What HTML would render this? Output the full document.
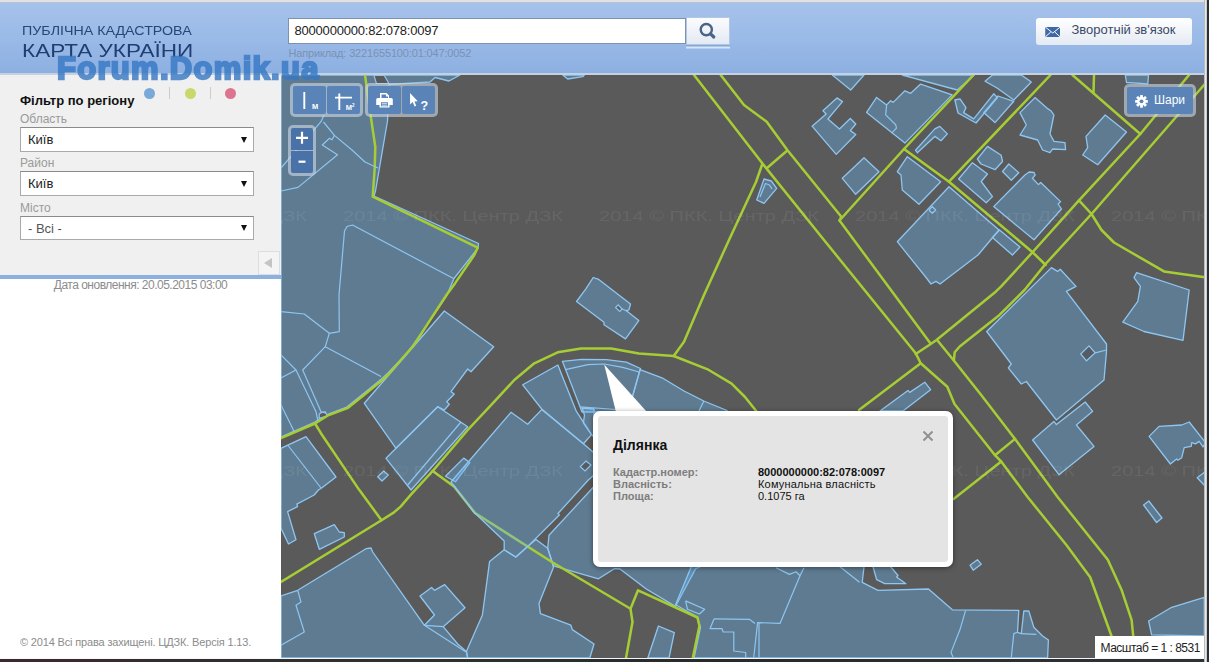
<!DOCTYPE html>
<html lang="uk"><head><meta charset="utf-8"><title>Публічна кадастрова карта України</title>
<style>
*{box-sizing:border-box;margin:0;padding:0}
html,body{width:1209px;height:662px;overflow:hidden;background:#fff;font-family:"Liberation Sans",Arial,sans-serif}
#topstrip{position:absolute;left:0;top:0;width:1209px;height:3px;background:#e2e2e2;border-bottom:1px solid #b4c3da}
#header{position:absolute;left:0;top:3px;width:1209px;height:72px;background:linear-gradient(#a5c2ea,#9abae7 50%,#8db0e2);border-bottom:2.500px solid #c5d0e0}
#logo1{position:absolute;left:22px;top:19.5px;font-size:13px;line-height:15px;color:#264777;white-space:nowrap;transform-origin:0 0;transform:scaleX(1.096)}
#logo2{position:absolute;left:21.500px;top:37.8px;font-size:18px;line-height:21px;color:#1f3f73;white-space:nowrap;transform-origin:0 0;transform:scaleX(1.252)}
#wm{position:absolute;left:57px;top:51.300px;font-size:31px;line-height:36px;font-weight:bold;color:#3678c4;opacity:.8;white-space:nowrap;letter-spacing:1.300px;-webkit-text-stroke:2.300px #3678c4;paint-order:stroke fill}
#search{position:absolute;left:288px;top:15.2px;width:398px;height:26px;background:#fff;border:1px solid #7f92ad;font-size:13px;line-height:24px;padding-left:5.500px;color:#222;letter-spacing:-.200px}
#sbtn{position:absolute;left:686px;top:14.2px;width:44px;height:28.300px;background:linear-gradient(#fbfcff,#e3e9f3);border:1px solid #b4c6e2;box-shadow:0 1.500px 0 #86a6d4,0 3.500px 0 #d3e6fb}
#hint{position:absolute;left:288.500px;top:43.7px;font-size:11px;line-height:13px;color:#7b91b3;white-space:nowrap;letter-spacing:-.150px}
#fb{position:absolute;left:1035.500px;top:14.8px;width:156px;height:27px;background:linear-gradient(#ffffff,#e4eaf3);border-radius:3px;font-size:13px;color:#3a4a66;line-height:24px;padding-left:36px;white-space:nowrap}
#side{position:absolute;left:0;top:75px;width:281px;height:587px;background:#fff}
#filter{position:absolute;left:0;top:0;width:281px;height:200px;background:#f0f0f0}
#fbar{position:absolute;left:0;top:200px;width:281px;height:4px;background:#8cb0df}
#ftitle{position:absolute;left:20px;top:18px;font-size:13px;font-weight:bold;color:#111;white-space:nowrap}
.lbl{position:absolute;left:20px;font-size:12px;color:#9a9a9a}
.sel{position:absolute;left:20px;width:234px;height:24.700px;background:#fff;border:1px solid #a9a9a9;border-top-color:#8a8a8a;font-size:13px;line-height:23px;padding-left:7px;color:#222}
.sel:after{content:"";position:absolute;right:6.500px;top:8.500px;border-left:3px solid transparent;border-right:3px solid transparent;border-top:6px solid #111}
.dot{position:absolute;top:13px;width:11px;height:11px;border-radius:50%}
.sep{position:absolute;top:12px;width:1px;height:12px;background:#ccc}
#coll{position:absolute;left:258px;top:176px;width:22px;height:24px;background:#f4f4f4;border:1px solid #ddd}
#coll:after{content:"";position:absolute;left:5px;top:6px;border-top:5px solid transparent;border-bottom:5px solid transparent;border-right:8px solid #c4c4c4}
#upd{position:absolute;left:0;top:203px;width:281px;text-align:center;font-size:12px;color:#8c8c8c;letter-spacing:-.500px}
#copy{position:absolute;left:20px;top:561px;font-size:11px;color:#8c8c8c;white-space:nowrap;letter-spacing:-.160px}
#map{position:absolute;left:281px;top:75px;width:928px;height:587px;background:#5a5a5a;overflow:hidden}
#map svg{position:absolute;left:0;top:0}
.tb{position:absolute;background:rgba(205,215,228,.62);border-radius:5px}
.tbi{position:absolute;background:#5a84b8;border-radius:2px}
.tbi svg{position:absolute;left:0;top:0}
#scale{position:absolute;left:813.500px;top:560.500px;width:112px;height:22.500px;background:#fff;font-size:12px;line-height:22px;padding-left:6px;padding-top:1.400px;color:#222;white-space:nowrap;letter-spacing:-.500px}
#pop{position:absolute;left:312px;top:335.500px;width:360px;height:156.500px;background:#fff;border-radius:7px;box-shadow:0 1px 5px rgba(0,0,0,.45)}
#popin{position:absolute;left:5px;top:5px;right:5px;bottom:5px;background:#e4e4e4;border-radius:3px}
#pop h3{position:absolute;left:20px;top:26.300px;font-size:14px;line-height:16px;color:#111}
.k{position:absolute;left:20px;font-size:11px;line-height:12px;font-weight:bold;color:#7d7d7d;white-space:nowrap}
.v{position:absolute;left:165px;font-size:11px;line-height:12px;color:#111;white-space:nowrap}
</style></head><body>
<div id="topstrip"></div>
<div id="header">
<div id="logo1">ПУБЛІЧНА КАДАСТРОВА</div>
<div id="logo2">КАРТА УКРАЇНИ</div>
<div id="search">8000000000:82:078:0097</div>
<div id="sbtn"><svg width="45" height="28" viewBox="0 0 45 28"><circle cx="19.300" cy="11.600" r="5.600" fill="none" stroke="#4a6487" stroke-width="2.400"/><path d="M23.600 15.900l3.200 3.100" stroke="#4a6487" stroke-width="3.200" stroke-linecap="round"/></svg></div>
<div id="hint">Наприклад: 3221655100:01:047:0052</div>
<div id="fb"><svg style="position:absolute;left:9px;top:9px" width="15.500" height="10" viewBox="0 0 15 10"><rect width="15" height="10" fill="#3e69a5"/><path d="M0 0l7.5 6L15 0M0 10l5.5-5M15 10l-5.5-5" stroke="#fff" stroke-width="1" fill="none"/></svg>Зворотній зв'язок</div>
</div>
<div id="side">
<div id="filter">
<div id="ftitle">Фільтр по регіону</div>
<div class="dot" style="left:144px;background:#79a9d8"></div><div class="sep" style="left:169px"></div>
<div class="dot" style="left:185px;background:#c9d86b"></div><div class="sep" style="left:210px"></div>
<div class="dot" style="left:225px;background:#dc7490"></div>
<div class="lbl" style="top:36.500px">Область</div><div class="sel" style="top:52px">Київ</div>
<div class="lbl" style="top:81px">Район</div><div class="sel" style="top:96px">Київ</div>
<div class="lbl" style="top:125.500px">Місто</div><div class="sel" style="top:140.500px;color:#555">- Всі -</div>
<div id="coll"></div>
</div>
<div id="fbar"></div>
<div id="upd">Дата оновлення: 20.05.2015 03:00</div>
<div id="copy">© 2014 Всі права захищені. ЦДЗК. Версія 1.13.</div>
</div>
<div id="map">
<svg id="mapsvg" width="928" height="587" viewBox="281 75 928 587">
<!--MAP-->
<g fill="#68b8f4" fill-opacity="0.36" stroke="#8ec6f1" stroke-width="1.3" stroke-linejoin="round">
<polygon points="281,75 460,75 449,81 435,77.5 430,82 389,84.5 387.5,121 375.5,191 374,196 478.5,243.5 478,248 454,278.5 446.5,296 424.5,329 408,352 388,373 381.5,379 363.3,393.8 346.8,407 327,414.5 314.5,422.3 281,437"/>
<polygon points="281,448.3 306,436.7 336,477 321,488.5 318.4,490 314.2,495 296.8,504.1 297.6,506.6 287.6,511.6 296,539.8 288.5,544 281,528.2"/>
<polygon points="314.3,533.7 334.3,524.7 339.3,532 344.3,532.7 344.3,537 319.3,549.3"/>
<polygon points="281,596 297.7,590.3 366,548.7 371,548 372.7,552 424.4,625.3 434.5,615 420,596 431.6,587.5 434.5,590.4 444.7,584.6 465,607.8 443.2,626.7 457.7,644 466.4,651.4 467.7,658 281,658"/>
<polygon points="364.3,403.3 444.3,311 493.7,346.7 471,371.7 467.7,369 451,391.7 454.3,394 446.7,401.7 449.3,404.3 444.3,410 437.7,406.7 396,448.3"/>
<polygon points="437.7,406.7 467.7,426.7 411,490 386,458.3 396,448.3"/>
<polygon points="377.7,476.7 383.7,471 388.3,475 382,481"/>
<polygon points="576.5,301.5 585.7,289.1 593.2,277.5 598.1,279.1 630.5,304 628.9,309.9 626.4,310.7 638.8,320.6 625.5,338.9 604,324.8 604,322.3"/>
<polygon points="562.7,75 567.7,79 582.7,76.7 584.3,75"/>
<polygon points="522.7,384.8 557.9,365 562.5,376.7 576.4,411.4 591.5,434.6 583.4,443.8 541.7,409"/>
<polygon points="562.4,361.3 581.5,359.4 606.4,359.7 626.4,362.2 640.5,368.5 633.2,394 627,412 582,412 580,406.8"/>
<polygon points="640,369.7 662,377.8 684,391 703.8,401 727,410.5 727,416 627,416 633.2,394"/>
<polygon points="582,408 594,409 594,437 591.5,434.6 583.4,423 584.5,415"/>
<polygon points="549,535.3 600,480 700,480 700,567 695.7,568.7 675.4,606.4 646.3,589 620,569 614.4,568.7 598.5,578.8 553.5,565.8 547.7,548.3"/>
<polygon points="466.4,651.4 482.4,615 489.6,561.4 504.2,549.8 515.8,557 528.8,545.4 536,539.6 547.7,548.3 553.5,567.2 539,603.5 540.4,613.6 570.9,625.2 572.3,629.6 594,644 589.8,658 467.7,658"/>
<polygon points="694,560 864.8,560 862.2,582.3 878,590.3 928.5,589 952.4,609.8 1018.8,610.3 1017.5,632.3 1021.3,633.6 1023.8,611 1028.8,611 1033.8,627.3 1042.6,636 1048.4,640 1047.6,658 694,658 700.5,627.3 696.8,616.8 675.6,604.8"/>
<polygon points="872.8,566 876.7,579.7 884.7,583.7 905.9,583.7 896.6,577 898,575.5 890,566"/>
<polygon points="658.4,626 674.3,632.6 669,658 647.8,658"/>
<polygon points="832.3,75 850.7,90 864,75"/>
<polygon points="902.3,75 957.3,90 972.3,76.7 974,75"/>
<polygon points="812.1,126.2 826.2,114 822.9,110.7 837,97.9 842.5,101.6 827.9,119 839.5,129 850.3,118.5 855.8,124 850.3,130.6 855.8,134.5 836.2,154.4"/>
<polygon points="866.6,112.4 876.6,97.4 886.6,104.9 890.7,100.7 893.2,102.4 904.9,90.8 910.7,93.3 920.6,84.1 952.2,94.9 904.9,143.1"/>
<polygon points="915.5,150.2 934.8,128.9 939.8,126.4 947.4,133.9 941,140.7 934.8,136.4 917.3,152.7"/>
<polygon points="985,81.3 992.5,75 1021.3,75 1031.3,82 1013.8,100 997,88"/>
<polygon points="983.7,112.6 998,96 1013.8,101.3 995,122.6"/>
<polygon points="954.9,100 960,98.8 966,107.6 963.6,112.6 973.7,118.9 993.7,93.8 997.5,97.6 976,123 958,113"/>
<polygon points="1020,112.6 1035,97.6 1046.3,107.6 1051.4,111.3 1053.9,115 1050,134 1054,141.4 1065,142.7 1065.6,149.7 1052.6,149 1050,152.7 1042.6,150 1037.6,140 1020,135 1026.3,125"/>
<polygon points="1105.2,115 1126.5,132 1097.7,164.7 1082.7,155 1087.7,147.7 1086,136.4"/>
<polygon points="842.3,178.3 864,157.7 879,171.7 855.7,194.3"/>
<polygon points="897.3,171.7 907.3,156.7 940.7,181.7 919,204.3 902.3,190 901,175"/>
<polygon points="897.3,241.7 949,186.7 999,230 978,255 940,284 936,281.4 931,284 925.7,277"/>
<polygon points="992.4,237.5 999.5,230 1020,247 1012.4,255"/>
<polygon points="977.4,159 987.5,146.4 1001.2,155.2 1002.5,161.5 995,169.7 981,164"/>
<polygon points="958.6,179 972.4,162.7 987.5,174 981.2,181.5 992.5,196.6 986.2,202.8"/>
<polygon points="1002.5,171.5 1008.8,164 1018.8,172.7 1011.3,180.3"/>
<polygon points="993.7,206.6 1024.9,175 1029.1,172 1034,172.5 1035.2,175 1032.4,178.3 1038.5,184.6 1040.7,182.5 1060.6,201.6 1058.1,204 1061.5,209 1034,239.8"/>
<polygon points="986.7,331.5 1051.4,267.6 1057.6,271.4 1060.2,269.3 1076,286.4 1066.4,291.4 1106.5,344 1106.5,351.6 1104,380 1056.4,420 1026.3,381.5 1021.3,384 1008.3,367.8 1011.3,364"/>
<polygon points="1032.6,440 1053.9,421.4 1056.4,424.6 1085.2,402 1092.7,411.3 1076.4,425 1094,446.4 1058.9,474.7"/>
<polygon points="880,411 908,390.5 909.8,392.4 924.8,382.2 930.6,389.7 903,411"/>
<polygon points="1136.6,272.6 1189.2,290 1183,340.3 1144,331.5 1122.8,322.2 1137.8,301.4 1140.4,286.4 1134,277.6"/>
<polygon points="1149.1,436.4 1159.1,426.4 1181.7,425 1189.2,422 1205.5,442.7 1203,447 1199.2,441.4 1195.5,443.9 1191.7,442.7 1191.2,446.4 1184.2,447.7 1181.7,457.7 1177.9,460.2 1176.6,459 1170.4,464"/>
<polygon points="1197.2,477.7 1205.5,471.5 1205.5,486.5"/>
<polygon points="1143.6,505 1148.8,501 1162,518 1156.6,522.5"/>
<polygon points="970,565.2 977.4,559.7 981.2,564.2 973.2,570.2"/>
<polygon points="1148.6,621 1171.7,607.3 1204.3,597.3 1204.3,636 1151.6,634.8"/>
<polygon points="756.7,200 764,179 771.3,181 776.7,188.3 764,203.3"/>
<polygon points="1125.3,75 1126.5,82.5 1147.8,83.8 1148.5,75"/>
</g>
<g fill="#595959" stroke="#8ec6f1" stroke-width="1.2">
<polygon points="319.2,414 321.7,412.4 325,411.6 327.5,415.7 319.2,418.2"/>
<polygon points="374,75.5 376.4,83.5 388.8,83.5 384.3,75.5"/>
</g>
<g fill="none" stroke="#a7cd35" stroke-width="2.5" stroke-linejoin="round" stroke-linecap="round">
<polyline points="365,75 371,118 375.3,147 374.7,168 372.7,196.7 477.7,247.7 474.3,255 455,283.4 446.5,295 430.4,319.6 414,345 388.7,374 382.3,380 364,395 347.4,408.2 327.5,415.7 315,423.5 281,438.1"/>
<polyline points="315,423.5 320.9,433.2 359,489.6 381.5,520.2"/>
<polyline points="281,582 381.5,520.2 394,512.4 400.6,506.6 410.9,494.6 432.7,471 467.7,430 494.3,401.7 514.3,380 534.3,363.3 557.7,352.3 581,348.5 611,348.4 639,353.5 673.7,356 708.4,369.7 731.6,383.6 745,397 757,412"/>
<polyline points="673.7,356 684,341.7 704,295 729,240 756,182 762.3,164"/>
<polyline points="432.7,471 454.3,486.7 475,513 552.7,562.5 630.5,608.7 632.5,622 626,658"/>
<polyline points="630.5,608.7 638,590.3 697.5,617.5 699.4,626 692.8,658"/>
<polyline points="694,75 762.3,163.3 824,240 915.7,353.3 920.7,363.3 947.3,386.7 954.5,404 995,455.2 1001.2,461.5 1027.6,497 1066.4,545 1090.2,577.2 1111.5,636 1118,658"/>
<polyline points="720.7,75 744,105 766.7,121.7 787.3,150 841.3,216.7 839.5,220.5 930.5,343.5"/>
<polyline points="767.3,167.7 786.7,151"/>
<polyline points="839.5,220.5 904,149 973.5,75"/>
<polyline points="904,149 949,181.7 1032.3,252 1045.7,265"/>
<polyline points="949,181.7 1050.5,75"/>
<polyline points="915.7,354 930.7,344 936.5,340 995.7,291.7 1001.2,286.4 1032.3,252.5 1079,200.3 1140.3,134 1189,75"/>
<polyline points="953.9,360.5 954.7,352.3 959.7,346.5 999.5,314.9 1024.5,290 1045.5,264 1091.5,214 1204,85 1209,79"/>
<polyline points="1079,200.3 1091.5,214 1101.5,230 1114,242.5 1164,271.4 1203,277 1209,277"/>
<polyline points="1072.5,75 1140.3,134"/>
<polyline points="1094,75 1093.5,92.5"/>
<polyline points="937.3,340.3 953.6,360.3 981.2,395 1015,438.9 1057.6,497 1107.8,559.7 1121.5,589.7 1131.6,619.8 1133.6,640"/>
<polyline points="1015,438.9 995,455.2"/>
<polyline points="1001.2,461.5 953.6,499"/>
<polyline points="920.7,363.3 859,410"/>
</g>
<g fill="#68b8f4" fill-opacity="0.36" stroke="#8ec6f1" stroke-width="1.3" stroke-linejoin="round">
<polygon points="445.5,476.3 463.7,458.1 469.8,462.5 455.4,481.8"/>
<polygon points="451,482 511,412.3 527.7,424.3 541.7,409.6 583.4,443.8 600,458 600,470 588.3,480 558,513.5 559.3,515 528.8,545.4 515.8,557 504.2,549.8 504.2,541 473.7,512"/>
</g>
<g fill="#565c62" stroke="#8ec6f1" stroke-width="1.2">
<polygon points="615.6,307.4 618.1,304.9 622.2,309 619.7,311.5"/>
<polygon points="580.3,466.7 586,461 591,465 585,471"/>
<polygon points="1080.7,354 1089,345.8 1095.2,352.8 1086.5,360.8"/>
</g>
<g fill="none" stroke="#8ec6f1" stroke-width="1.2" stroke-linejoin="round">
<polyline points="281,168 321,121.7 324,115"/>
<polyline points="323.5,122 334.4,135.4 352,150 365,162 378,168"/>
<polyline points="334.4,135.4 332,139.8 329.5,138.3 322.3,145 337.5,154.7 298,187.4 281,191"/>
<polyline points="453.5,278.5 352.5,225 347,226.5 344.5,231 339,295 339.3,331.7 329.3,333.3 325.3,346.7 381,376.5"/>
<polyline points="281,311.7 304.3,314 329.3,333.3"/>
<polyline points="325.3,346.7 302.7,370 321,411.7 326,413.3"/>
<polyline points="281,355 296,370 281,378"/>
<polyline points="296,370 316,411.7 317.7,420"/>
<polyline points="281,405 294.3,431.7"/>
<polyline points="287.7,445 321,488"/>
<polyline points="297.7,590.3 301,602 296,605.3 304.3,632 281,645.3"/>
<polyline points="424.4,625.3 443.2,626.7"/>
<polyline points="424.4,625.3 466,652"/>
<polyline points="461,422 407.7,485"/>
<polyline points="622.2,309 627,311"/>
<polyline points="565.5,369.7 588,364.6 604.2,364 622.7,367.4 639,372"/>
<polyline points="580,406.8 616,409.5"/>
<polyline points="703.8,401 699,411"/>
<polyline points="839.7,566.5 859.5,582.3"/>
<polyline points="685.6,600.9 704.7,609.3 699.4,614 687.5,609.3 685.6,600.9"/>
<polyline points="776,567.8 789.4,574.4 796,571.8 800,575.7 804,567.8"/>
<polyline points="800,575.7 780,623.4 757.6,622.6 753.7,657.8"/>
<polyline points="759,623 759,657.8"/>
<polyline points="714,618.9 749.7,619.4 755,623.4"/>
<polyline points="714,618.9 710,628.7 722,628.7 723.2,632 733.8,632 733.8,651 745.7,652.5 745.7,657.8"/>
<polyline points="965.6,610.3 959.9,629.8 951,652.4 953,657"/>
<polyline points="1017.5,632.3 1013.8,633.6 1011.3,657.4"/>
<polyline points="1021.3,633.6 1036.3,634.3"/>
<polyline points="886.6,104.9 885.7,114.9 895.7,124.8 896.5,128.2 891.6,133.1"/>
<polyline points="929,210 932.3,206.7 935.7,210 932.3,213.3 929,210"/>
<polyline points="1095.2,352.8 1106.5,350"/>
<polyline points="760,197 765.5,183.5 769.5,185 772,189"/>
</g>
<g font-family="Liberation Sans, sans-serif" font-size="14.5" fill="#ffffff" fill-opacity="0.07" style="filter:blur(.4px)">
<text x="87" y="221" textLength="220" lengthAdjust="spacingAndGlyphs">2014 © ПКК. Центр ДЗК</text>
<text x="343" y="221" textLength="220" lengthAdjust="spacingAndGlyphs">2014 © ПКК. Центр ДЗК</text>
<text x="599" y="221" textLength="220" lengthAdjust="spacingAndGlyphs">2014 © ПКК. Центр ДЗК</text>
<text x="855" y="221" textLength="220" lengthAdjust="spacingAndGlyphs">2014 © ПКК. Центр ДЗК</text>
<text x="1111" y="221" textLength="220" lengthAdjust="spacingAndGlyphs">2014 © ПКК. Центр ДЗК</text>
<text x="87" y="476" textLength="220" lengthAdjust="spacingAndGlyphs">2014 © ПКК. Центр ДЗК</text>
<text x="343" y="476" textLength="220" lengthAdjust="spacingAndGlyphs">2014 © ПКК. Центр ДЗК</text>
<text x="599" y="476" textLength="220" lengthAdjust="spacingAndGlyphs">2014 © ПКК. Центр ДЗК</text>
<text x="855" y="476" textLength="220" lengthAdjust="spacingAndGlyphs">2014 © ПКК. Центр ДЗК</text>
<text x="1111" y="476" textLength="220" lengthAdjust="spacingAndGlyphs">2014 © ПКК. Центр ДЗК</text>
</g>
<!--/MAP-->
</svg>

<div class="tb" style="left:9px;top:8px;width:73px;height:34px"><div class="tbi" style="left:3px;top:3px;width:32.5px;height:27.5px"><svg width="33" height="28" viewBox="0 0 33 28"><path d="M11.3 6v17" stroke="#fff" stroke-width="1.9"/><text x="19" y="22.5" font-size="7.5" font-weight="bold" fill="#fff" font-family="Liberation Sans, sans-serif">M</text></svg></div><div class="tbi" style="left:37px;top:3px;width:33px;height:27.5px"><svg width="33" height="28" viewBox="0 0 33 28"><path d="M12.3 7.5v16.5M8 11.6h17" stroke="#fff" stroke-width="1.9" fill="none"/><text x="18.7" y="23.5" font-size="7.5" font-weight="bold" fill="#fff" font-family="Liberation Sans, sans-serif">M<tspan font-size="4.5" dy="-3">2</tspan></text></svg></div></div>
<div class="tb" style="left:84px;top:8px;width:73px;height:34px"><div class="tbi" style="left:3px;top:3px;width:32.5px;height:27.5px"><svg width="33" height="28" viewBox="0 0 33 28"><path d="M12 12V7h6.5l2.5 2.5V12h2.2q1.6 0 1.600 1.600v5.400h-3.300v2.500h-10v-2.500h-3.300v-5.400q0-1.600 1.600-1.600z" fill="#fff"/><path d="M13.500 8.500h4.500v2h2v1.500h-6.500zM13 16.200h7v4h-7z" fill="#5a84b8"/><path d="M13.800 17.600h5.400M13.800 19.200h5.400" stroke="#fff" stroke-width=".7"/></svg></div><div class="tbi" style="left:37px;top:3px;width:33px;height:27.5px"><svg width="33" height="28" viewBox="0 0 33 28"><path d="M8 7l7.800 8.200-3.400.2 1.800 4.300-1.700.7-1.800-4.300-2.600 2.300z" fill="#fff"/><text x="18.500" y="24.400" font-size="12.500" font-weight="bold" fill="#fff" font-family="Liberation Sans, sans-serif">?</text></svg></div></div>
<div class="tb" style="left:7px;top:50px;width:27.5px;height:51px"><div class="tbi" style="left:3px;top:3px;width:22px;height:21.8px;background:#4872a8;border-radius:2px 2px 0 0"><svg width="22" height="22" viewBox="0 0 22 22"><path d="M5 9.800h12M11 3.800v12" stroke="#fff" stroke-width="2.200"/></svg></div><div class="tbi" style="left:3px;top:25.500px;width:22px;height:22.300px;background:#4872a8;border-radius:0 0 2px 2px"><svg width="22" height="22" viewBox="0 0 22 22"><path d="M7.500 10.700h7" stroke="#fff" stroke-width="2.200"/></svg></div></div>
<div class="tb" style="left:843px;top:9px;width:72px;height:33px"><div class="tbi" style="left:3px;top:3px;width:66px;height:27px;color:#fff;font-size:12px;line-height:27px;padding-left:27px;white-space:nowrap"><svg width="27" height="27" viewBox="0 0 27 27"><g transform="translate(14.500 14.300)" fill="#fff"><circle r="4.300"/><g id="gt"><rect x="-1.400" y="-6.400" width="2.800" height="12.800" rx=".5"/></g><use href="#gt" transform="rotate(45)"/><use href="#gt" transform="rotate(90)"/><use href="#gt" transform="rotate(135)"/><circle r="1.900" fill="#5a84b8"/></g></svg>Шари</div></div>
<svg style="position:absolute;left:0;top:0;pointer-events:none" width="928" height="587" viewBox="281 75 928 587"><polygon points="604.200,364.600 616,412 647,412" fill="#fff"/></svg><div id="pop"><div id="popin"></div><h3>Ділянка</h3>
<div class="k" style="top:55px">Кадастр.номер:</div><div class="v" style="top:55px;font-weight:bold">8000000000:82:078:0097</div>
<div class="k" style="top:67px">Власність:</div><div class="v" style="top:67px;letter-spacing:.200px">Комунальна власність</div>
<div class="k" style="top:79px">Площа:</div><div class="v" style="top:79px">0.1075 га</div>
<svg style="position:absolute;left:329px;top:19px" width="12" height="12" viewBox="0 0 12 12"><path d="M1.5 1.5l9 9M10.5 1.5l-9 9" stroke="#8e8e8e" stroke-width="1.900"/></svg>
</div>
<div id="scale">Масштаб = 1 : 8531</div>
</div>
<div style="position:absolute;left:0;top:657.600px;width:1209px;height:1.500px;background:#f6f6f6"></div><div style="position:absolute;left:0;top:659px;width:1209px;height:3px;background:linear-gradient(90deg,#3a2a2e,#2a3230 40%,#252a2e 60%,#2c3338)"></div><div style="position:absolute;left:1203.700px;top:0;width:3.600px;height:662px;background:linear-gradient(90deg,#a4a8ac,#eceeef 55%,#b4b8bc)"></div><div style="position:absolute;left:1207.300px;top:0;width:1.700px;height:662px;background:#2b2f33"></div>
<div id="wm">Forum.Domik.ua</div>
</body></html>
